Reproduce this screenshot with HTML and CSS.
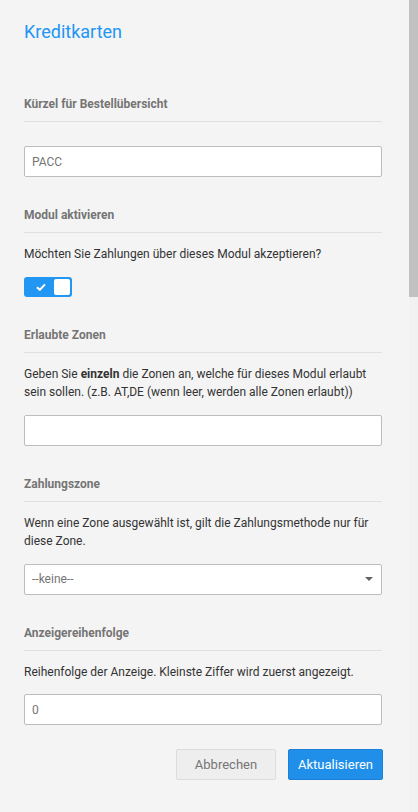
FILE: index.html
```html
<!DOCTYPE html>
<html lang="de">
<head>
<meta charset="utf-8">
<title>Kreditkarten</title>
<link rel="stylesheet" href="styles.css">
</head>
<body>
<div class="frame">
  <div class="panel">
    <h1 class="title">Kreditkarten</h1>

    <section class="field field--plain">
      <h2 class="field-label">Kürzel für Bestellübersicht</h2>
      <input class="text-input" type="text" value="PACC">
    </section>

    <section class="field">
      <h2 class="field-label">Modul aktivieren</h2>
      <p class="field-help">Möchten Sie Zahlungen über dieses Modul akzeptieren?</p>
      <span class="toggle">
        <svg class="toggle-check" width="10" height="8" viewBox="0 0 10 8"><path d="M1 4.2 L3.8 6.8 L9 1.4" fill="none" stroke="#fff" stroke-width="2"/></svg>
        <span class="toggle-knob"></span>
      </span>
    </section>

    <section class="field">
      <h2 class="field-label">Erlaubte Zonen</h2>
      <p class="field-help">Geben Sie <b>einzeln</b> die Zonen an, welche für dieses Modul erlaubt sein sollen. (z.B. AT,DE (wenn leer, werden alle Zonen erlaubt))</p>
      <input class="text-input" type="text" value="">
    </section>

    <section class="field">
      <h2 class="field-label">Zahlungszone</h2>
      <p class="field-help">Wenn eine Zone ausgewählt ist, gilt die Zahlungsmethode nur für diese Zone.</p>
      <div class="select">
        <span class="select-value">--keine--</span>
        <span class="select-caret"></span>
      </div>
    </section>

    <section class="field">
      <h2 class="field-label">Anzeigereihenfolge</h2>
      <p class="field-help">Reihenfolge der Anzeige. Kleinste Ziffer wird zuerst angezeigt.</p>
      <input class="text-input" type="text" value="0">
    </section>

    <div class="actions">
      <button class="btn btn--cancel" type="button">Abbrechen</button>
      <button class="btn btn--primary" type="button">Aktualisieren</button>
    </div>
  </div>
  <div class="scrollbar" aria-hidden="true">
    <div class="scrollbar-thumb"></div>
  </div>
</div>
</body>
</html>
```

FILE: styles.css
```css
html,
body {
  margin: 0;
  height: 100%;
  overflow: hidden;
}
body {
  background: #f4f4f4;
  font-family: Roboto, "Liberation Sans", sans-serif;
  font-size: 12px;
  color: #333;
}
.frame {
  display: flex;
  height: 100%;
}
.panel {
  flex: 1;
  min-width: 0;
  padding: 20px 27px 0 24px;
}
.scrollbar {
  display: flex;
  flex-direction: column;
  width: 9px;
  flex-shrink: 0;
  background: #f1f1f1;
}
.scrollbar-thumb {
  height: 297px;
  background: #c1c1c1;
}
.title {
  margin: 0 0 52px;
  font-size: 18px;
  line-height: 24px;
  font-weight: 400;
  color: #2196f3;
}
.field {
  margin-bottom: 30px;
}
.field-label {
  margin: 0;
  padding-bottom: 9px;
  border-bottom: 1px solid #e0e0e0;
  font-size: 12px;
  line-height: 16px;
  font-weight: 700;
  color: #757575;
}
.field-help {
  margin: 12px 0 13px;
  line-height: 18.5px;
}
.field--plain .text-input {
  margin-top: 24px;
}
.text-input {
  display: block;
  box-sizing: border-box;
  width: 100%;
  height: 31px;
  margin: 0;
  padding: 0 7px;
  border: 1px solid #bdbdbd;
  border-radius: 2px;
  background: #fff;
  font-family: inherit;
  font-size: 12px;
  color: #757575;
  outline: none;
}
.toggle {
  display: flex;
  align-items: center;
  justify-content: space-between;
  box-sizing: border-box;
  width: 48px;
  height: 20px;
  padding: 2px 2px 2px 12px;
  border-radius: 3px;
  background: #2196f3;
}
.toggle-check {
  display: block;
}
.toggle-knob {
  width: 16px;
  height: 16px;
  border-radius: 2px;
  background: #fff;
}
.select {
  display: flex;
  align-items: center;
  justify-content: space-between;
  box-sizing: border-box;
  height: 31px;
  padding: 0 8px 0 7px;
  border: 1px solid #bdbdbd;
  border-radius: 2px;
  background: #fff;
  color: #757575;
}
.select-caret {
  width: 0;
  height: 0;
  border-left: 4px solid transparent;
  border-right: 4px solid transparent;
  border-top: 4px solid #616161;
}
.actions {
  display: flex;
  justify-content: flex-end;
  gap: 12px;
  margin-top: -6px;
  margin-right: -1px;
}
.btn {
  height: 31px;
  border-radius: 2px;
  font-family: inherit;
  font-size: 13px;
  cursor: pointer;
}
.btn--cancel {
  width: 100px;
  border: 1px solid #dcdcdc;
  background: #eeeeee;
  color: #757575;
}
.btn--primary {
  width: 95px;
  border: 1px solid #1b80d6;
  background: #1f8fea;
  color: #fff;
}
```
